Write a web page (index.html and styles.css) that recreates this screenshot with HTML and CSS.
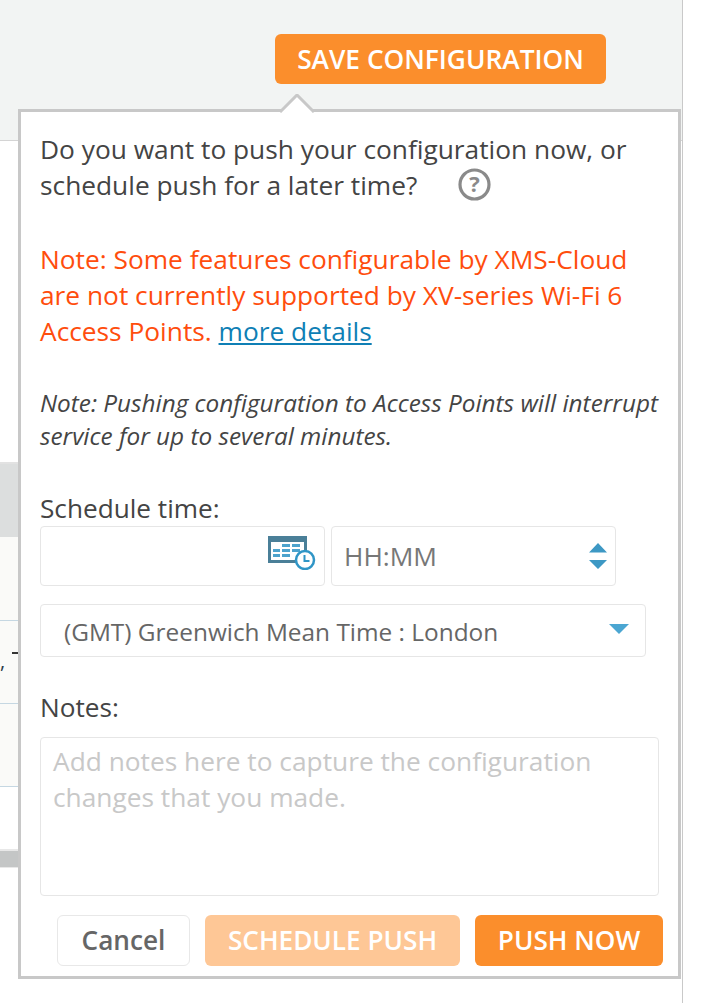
FILE: index.html
```html
<!DOCTYPE html>
<html lang="en">
<head>
<meta charset="utf-8">
<title>Save configuration</title>
<link rel="stylesheet" href="styles.css">
</head>
<body>
<div class="page">
  <header class="topbar">
    <button class="btn btn-save">SAVE CONFIGURATION</button>
  </header>
  <div class="bg-table">
    <div class="bg-blank"></div>
    <div class="bg-head"></div>
    <div class="bg-row bg-row-first"></div>
    <div class="bg-row"><span class="frag-comma">,</span><span class="frag-dash"></span></div>
    <div class="bg-row"></div>
    <div class="bg-foot"></div>
    <div class="bg-scroll"></div>
  </div>
</div>

<section class="popover">
  <svg class="arrow" width="34" height="19" viewBox="0 0 34 19"><path d="M0 18 L17 1 L34 18" fill="#fff" stroke="#c8c8c8" stroke-width="3"/></svg>
  <p class="lead">Do you want to push your configuration now, or<br>schedule push for a later time?<svg class="help" width="33" height="33" viewBox="0 0 33 33"><circle cx="16.500" cy="16.500" r="14.500" fill="none" stroke="#8a8a8a" stroke-width="3.200"/><text x="16.500" y="24" text-anchor="middle" class="help-q">?</text></svg></p>
  <p class="warn">Note: Some features configurable by XMS-Cloud<br>are not currently supported by XV-series Wi-Fi 6<br>Access Points. <a href="#" class="link">more details</a></p>
  <p class="note">Note: Pushing configuration to Access Points will interrupt<br>service for up to several minutes.</p>
  <div class="label label-time">Schedule time:</div>
  <div class="time-row">
    <div class="field field-date">
      <svg width="50" height="36" viewBox="0 0 50 36">
        <rect x="1" y="2" width="39" height="27" fill="#4a7f98"/>
        <rect x="4" y="8" width="33" height="18" fill="#fff"/>
        <g fill="#4da3cd">
          <rect x="15" y="10" width="8" height="3"/><rect x="25" y="10" width="8" height="3"/>
          <rect x="6" y="15" width="7" height="3"/><rect x="15" y="15" width="8" height="3"/><rect x="25" y="15" width="8" height="3"/>
          <rect x="6" y="20" width="7" height="3"/><rect x="15" y="20" width="8" height="3"/>
        </g>
        <circle cx="38" cy="26" r="9" fill="#fff" stroke="#2f95c6" stroke-width="2.500"/>
        <path d="M37.500 21 V27 H42.500" fill="none" stroke="#2f95c6" stroke-width="2"/>
      </svg>
    </div>
    <div class="field field-clock">
      <span class="placeholder-time">HH:MM</span>
      <svg width="18" height="28" viewBox="0 0 18 28"><path d="M9 1 L18 10.500 H0 Z M0 18 H18 L9 27 Z" fill="#3d98c4"/></svg>
    </div>
  </div>
  <div class="field field-zone">
    <span>(GMT) Greenwich Mean Time : London</span>
    <svg width="20" height="10" viewBox="0 0 20 10"><path d="M0 0 H20 L10 10 Z" fill="#4ba6d2"/></svg>
  </div>
  <div class="label label-notes">Notes:</div>
  <div class="field field-notes">Add notes here to capture the configuration changes that you made.</div>
  <div class="actions">
    <button class="btn btn-cancel">Cancel</button>
    <button class="btn btn-schedule">SCHEDULE PUSH</button>
    <button class="btn btn-push">PUSH NOW</button>
  </div>
</section>
</body>
</html>
```

FILE: styles.css
```css
* { box-sizing: border-box; }
html, body { margin: 0; padding: 0; }
body {
  width: 711px;
  height: 1003px;
  overflow: hidden;
  background: #fff;
  font-family: "Open Sans", sans-serif;
  color: #444;
  position: relative;
}
.page {
  width: 683px;
  height: 1003px;
  border-right: 1px solid #c9c9c9;
}
.topbar {
  height: 141px;
  background: #f2f4f3;
  border-bottom: 1px solid #d4d4d4;
  display: flex;
  justify-content: flex-end;
  align-items: flex-start;
  padding: 34px 76px 0 0;
}
.btn {
  font-family: "Open Sans", sans-serif;
  border: 0;
  border-radius: 6px;
  padding: 0;
  font-weight: 600;
  color: #fff;
}
.btn-save {
  width: 331px;
  height: 50px;
  background: #fb8e2c;
  font-size: 26.300px;
}
.bg-table { width: 19px; display: flex; flex-direction: column; }
.bg-blank { height: 323px; border-bottom: 2px solid #e2e2e2; }
.bg-head { height: 73px; background: #dcdede; }
.bg-row {
  height: 83px;
  background: #fafaf8;
  border-bottom: 1px solid #c5d7e2;
  position: relative;
  overflow: hidden;
}
.bg-row-first { height: 84px; }
.bg-foot { height: 62px; }
.bg-scroll {
  height: 19px;
  background: #c4c6c6;
  border-top: 2px solid #e8e8e8;
  border-bottom: 1px solid #e8e8e8;
}
.frag-comma { position: absolute; left: 0; top: 25px; font-size: 20px; color: #2a3a4a; line-height: 30px; }
.frag-dash { position: absolute; left: 12px; top: 31px; width: 7px; height: 2px; background: #333; }

.popover {
  position: absolute;
  left: 18px;
  top: 109px;
  width: 663px;
  height: 870px;
  background: #fff;
  border: 3px solid #c8c8c8;
  padding: 19px 0 0 19px;
}
.arrow { position: absolute; left: 259px; top: -18px; }
p { margin: 0; }
.lead, .warn {
  font-size: 26.300px;
  line-height: 36px;
}
.help { vertical-align: middle; margin-left: 41px; position: relative; top: -3px; }
.help-q { font: 700 22px "Open Sans", sans-serif; fill: #8a8a8a; }
.warn { margin-top: 37px; color: #ff4d0d; }
.link { color: #0f7fb5; }
.note {
  margin-top: 37px;
  font-size: 24.300px;
  line-height: 33px;
  font-style: italic;
}
.label { font-size: 26.200px; line-height: 36px; }
.label-time { margin-top: 38px; }
.label-notes { margin-top: 32px; }
.time-row { display: flex; gap: 6px; }
.field {
  background: #fff;
  border: 1px solid #e6e6e6;
  border-radius: 4px;
  color: #666;
}
.field-date {
  width: 285px;
  height: 60px;
  display: flex;
  justify-content: flex-end;
  padding: 7px 7px 0 0;
}
.field-clock {
  width: 285px;
  height: 60px;
  display: flex;
  align-items: center;
  justify-content: space-between;
  padding: 0 8px 0 12px;
}
.placeholder-time { font-size: 26.300px; color: #777; }
.field-zone {
  width: 606px;
  height: 53px;
  margin-top: 18px;
  display: flex;
  align-items: center;
  justify-content: space-between;
  padding: 2px 16px 0 23px;
  font-size: 24.400px;
}
.field-zone svg { position: relative; top: -3px; }
.field-notes {
  width: 619px;
  height: 159px;
  margin-top: 12px;
  padding: 5px 12px;
  font-size: 26.300px;
  line-height: 36px;
  color: #c8c8c8;
}
.actions {
  display: flex;
  gap: 15px;
  margin: 19px 0 0 17px;
}
.actions .btn { height: 51px; font-size: 26.200px; line-height: 49px; }
.btn-cancel { width: 133px; background: #fff; border: 1px solid #e8e8e8; }
.actions .btn-cancel { color: #666; }
.btn-schedule { width: 255px; background: #fec796; }
.btn-push { width: 188px; background: #fb8e2c; }
```
